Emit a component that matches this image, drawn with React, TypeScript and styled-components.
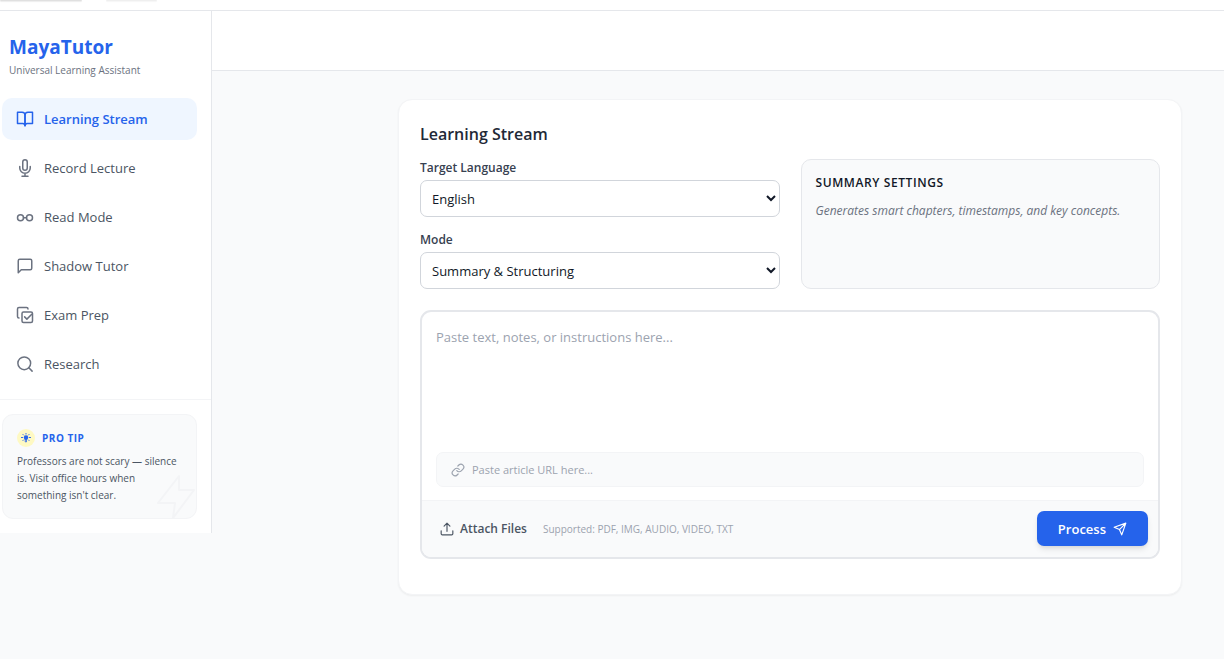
import React from 'react';
import styled, { createGlobalStyle, css } from 'styled-components';

const GlobalStyle = createGlobalStyle`
  *, *::before, *::after { box-sizing: border-box; }
  body {
    margin: 0;
    background: #f9fafb;
    color: #111827;
    font-family: 'Segoe UI', 'Open Sans', 'Noto Sans', sans-serif;
    font-size: 13px;
    line-height: 20px;
  }
  button, input, select, textarea { font: inherit; color: inherit; margin: 0; }
  h1, h2, h3, p { margin: 0; }
`;

const Page = styled.div`
  min-height: 100vh;
`;

const TopStrip = styled.div`
  display: flex;
  gap: 24px;
  height: 11px;
  background: #fff;
  border-bottom: 1px solid #e5e7eb;
`;

const TopTab = styled.div<{ $width: number; $strong?: boolean }>`
  width: ${(p) => p.$width}px;
  height: 1px;
  border-radius: 0 0 4px 4px;
  background: ${(p) => (p.$strong ? '#e0e0e0' : '#efefef')};
  box-shadow: 0 1px 1px ${(p) => (p.$strong ? '#ebebeb' : '#f5f5f5')};
`;

const Shell = styled.div`
  display: flex;
  align-items: flex-start;
`;

const Sidebar = styled.aside`
  flex: 0 0 212px;
  background: #fff;
  border-right: 1px solid #e5e7eb;
`;

const Brand = styled.div`
  padding: 22px 9px 19px;
`;

const BrandName = styled.h1`
  font-size: 19px;
  line-height: 28px;
  font-weight: 700;
  color: #2563eb;
`;

const Tagline = styled.p`
  font-size: 10px;
  line-height: 18px;
  color: #6b7280;
`;

const Nav = styled.nav`
  display: flex;
  flex-direction: column;
  gap: 7px;
  padding: 0 14px 14px 2px;
`;

const NavItem = styled.button<{ $active?: boolean }>`
  display: flex;
  align-items: center;
  gap: 10px;
  height: 42px;
  padding: 0 14px;
  border: 0;
  border-radius: 10px;
  background: transparent;
  color: #4b5563;
  text-align: left;
  cursor: pointer;

  svg { color: #6b7280; }

  ${(p) =>
    p.$active &&
    css`
      background: #eff6ff;
      color: #2563eb;
      font-weight: 600;
      svg { color: #2563eb; }
    `}
`;

const TipArea = styled.div`
  padding: 14px 14px 14px 2px;
  border-top: 1px solid #f3f4f6;
`;

const Tip = styled.section`
  position: relative;
  overflow: hidden;
  padding: 14px;
  border: 1px solid #f3f4f6;
  border-radius: 11px;
  background: #f9fafb;
`;

const TipHead = styled.div`
  display: flex;
  align-items: center;
  gap: 7px;
  margin-bottom: 6px;
`;

const TipBadge = styled.span`
  display: grid;
  place-items: center;
  width: 18px;
  height: 18px;
  border-radius: 50%;
  background: #fef9c3;
  color: #2563eb;
`;

const TipTitle = styled.h3`
  font-size: 10px;
  line-height: 18px;
  font-weight: 700;
  letter-spacing: 0.05em;
  color: #2563eb;
`;

const TipText = styled.p`
  font-size: 10px;
  line-height: 17px;
  color: #4b5563;
`;

const Bolt = styled.svg`
  position: absolute;
  right: -2px;
  bottom: -2px;
  color: #f3f4f6;
`;

const Main = styled.main`
  flex: 1;
  min-width: 0;
`;

const HeaderBar = styled.header`
  height: 60px;
  background: #fff;
  border-bottom: 1px solid #e5e7eb;
`;

const Content = styled.div`
  padding: 28px 42px 28px 186px;
`;

const Card = styled.section`
  padding: 20px 21px 35px;
  border: 1px solid #f3f4f6;
  border-radius: 14px;
  background: #fff;
  box-shadow: 0 1px 2px rgba(0, 0, 0, 0.05);
`;

const CardTitle = styled.h2`
  font-size: 16px;
  line-height: 28px;
  margin-bottom: 11px;
  font-weight: 600;
  color: #1f2937;
`;

const SettingsGrid = styled.div`
  display: grid;
  grid-template-columns: 1fr 1fr;
  gap: 21px;
  margin-bottom: 21px;
`;

const Fields = styled.div`
  display: flex;
  flex-direction: column;
  gap: 14px;
`;

const Field = styled.div`
  display: flex;
  flex-direction: column;
  gap: 3px;
`;

const Label = styled.label`
  font-size: 12px;
  line-height: 18px;
  font-weight: 600;
  color: #374151;
`;

const Select = styled.select`
  width: 100%;
  height: 37px;
  padding: 0 7px;
  border: 1px solid #d1d5db;
  border-radius: 7px;
  background: #fff;
  color: #111827;
`;

const SummaryPanel = styled.section`
  padding: 14px;
  border: 1px solid #e5e7eb;
  border-radius: 10px;
  background: #f9fafb;
`;

const SummaryTitle = styled.h3`
  font-size: 12px;
  line-height: 18px;
  margin-bottom: 10px;
  font-weight: 600;
  letter-spacing: 0.05em;
  color: #111827;
`;

const SummaryText = styled.p`
  font-size: 12px;
  line-height: 18px;
  font-style: italic;
  color: #6b7280;
`;

const Composer = styled.div`
  overflow: hidden;
  border: 2px solid #e5e7eb;
  border-radius: 11px;
  background: #fff;
`;

const NotesInput = styled.textarea`
  display: block;
  width: 100%;
  height: 140px;
  padding: 15px 14px;
  border: 0;
  outline: 0;
  resize: none;
  background: transparent;
  line-height: 20px;
  &::placeholder { color: #9ca3af; }
`;

const UrlRow = styled.label`
  display: flex;
  align-items: center;
  gap: 7px;
  height: 35px;
  margin: 0 14px 13px;
  padding: 0 14px;
  border: 1px solid #f3f4f6;
  border-radius: 7px;
  background: #f9fafb;
  color: #9ca3af;
`;

const UrlInput = styled.input`
  flex: 1;
  min-width: 0;
  padding: 0;
  border: 0;
  outline: 0;
  background: transparent;
  font-size: 11px;
  line-height: 18px;
  color: #374151;
  &::placeholder { color: #9ca3af; }
`;

const ComposerFooter = styled.div`
  display: flex;
  align-items: center;
  gap: 8px;
  padding: 10px 10px 11px;
  border-top: 1px solid #f3f4f6;
  background: #f9fafb;
`;

const AttachButton = styled.button`
  display: flex;
  align-items: center;
  gap: 6px;
  padding: 7px 8px;
  border: 0;
  background: transparent;
  font-size: 12px;
  line-height: 18px;
  font-weight: 600;
  color: #4b5563;
  cursor: pointer;
`;

const Supported = styled.span`
  flex: 1;
  font-size: 10px;
  line-height: 18px;
  color: #9ca3af;
`;

const ProcessButton = styled.button`
  display: flex;
  align-items: center;
  gap: 7px;
  height: 35px;
  padding: 0 21px;
  border: 0;
  border-radius: 7px;
  background: #2563eb;
  color: #fff;
  font-weight: 600;
  box-shadow: 0 4px 6px -1px rgba(0, 0, 0, 0.1), 0 2px 4px -2px rgba(0, 0, 0, 0.1);
  cursor: pointer;
`;

type IconProps = { size?: number; children: React.ReactNode };

const Icon = ({ size = 18, children }: IconProps) => (
  <svg
    width={size}
    height={size}
    viewBox="0 0 24 24"
    fill="none"
    stroke="currentColor"
    strokeWidth={2}
    strokeLinecap="round"
    strokeLinejoin="round"
    aria-hidden="true"
  >
    {children}
  </svg>
);

const navItems = [
  {
    label: 'Learning Stream',
    icon: (
      <>
        <path d="M2 3h6a4 4 0 0 1 4 4v14a3 3 0 0 0-3-3H2z" />
        <path d="M22 3h-6a4 4 0 0 0-4 4v14a3 3 0 0 1 3-3h7z" />
      </>
    ),
  },
  {
    label: 'Record Lecture',
    icon: (
      <>
        <path d="M12 1a3 3 0 0 0-3 3v8a3 3 0 0 0 6 0V4a3 3 0 0 0-3-3z" />
        <path d="M19 10v2a7 7 0 0 1-14 0v-2M12 19v4M8 23h8" />
      </>
    ),
  },
  {
    label: 'Read Mode',
    icon: (
      <>
        <circle cx="6" cy="13" r="4" />
        <circle cx="18" cy="13" r="4" />
        <path d="M10 13h4" />
      </>
    ),
  },
  {
    label: 'Shadow Tutor',
    icon: <path d="M21 15a2 2 0 0 1-2 2H7l-4 4V5a2 2 0 0 1 2-2h14a2 2 0 0 1 2 2z" />,
  },
  {
    label: 'Exam Prep',
    icon: (
      <>
        <rect x="8" y="8" width="14" height="14" rx="2" />
        <path d="M4 16a2 2 0 0 1-2-2V4a2 2 0 0 1 2-2h10a2 2 0 0 1 2 2" />
        <path d="M11.500 14.500l3 3L21 11" />
      </>
    ),
  },
  {
    label: 'Research',
    icon: (
      <>
        <circle cx="11" cy="11" r="8.500" />
        <path d="M21.500 21.500l-4.400-4.400" />
      </>
    ),
  },
];

export default function App() {
  return (
    <Page>
      <GlobalStyle />
      <TopStrip>
        <TopTab $width={82} $strong />
        <TopTab $width={51} />
      </TopStrip>
      <Shell>
        <Sidebar>
          <Brand>
            <BrandName>MayaTutor</BrandName>
            <Tagline>Universal Learning Assistant</Tagline>
          </Brand>
          <Nav>
            {navItems.map((item, i) => (
              <NavItem key={item.label} type="button" $active={i === 0}>
                <Icon>{item.icon}</Icon>
                {item.label}
              </NavItem>
            ))}
          </Nav>
          <TipArea>
            <Tip>
              <TipHead>
                <TipBadge>
                  <svg width="10" height="10" viewBox="0 0 20 20" fill="none" stroke="currentColor" strokeWidth="2" strokeLinecap="round" aria-hidden="true">
                    <circle cx="10" cy="9" r="4.5" fill="currentColor" stroke="none" />
                    <path d="M10 1v1M4 3l1 1M16 3l-1 1M1 9h2M17 9h2M4 15l1-1M16 15l-1-1" />
                    <path d="M9 12h2v6H9z" fill="currentColor" strokeWidth="1" />
                  </svg>
                </TipBadge>
                <TipTitle>PRO TIP</TipTitle>
              </TipHead>
              <TipText>Professors are not scary — silence is. Visit office hours when something isn't clear.</TipText>
              <Bolt width="42" height="48" viewBox="0 0 42 48" fill="none" stroke="currentColor" strokeWidth="2" strokeLinejoin="round" aria-hidden="true">
                <path d="M23 4 2 31h17l-2 15 21-28H23z" />
              </Bolt>
            </Tip>
          </TipArea>
        </Sidebar>
        <Main>
          <HeaderBar />
          <Content>
            <Card>
              <CardTitle>Learning Stream</CardTitle>
              <SettingsGrid>
                <Fields>
                  <Field>
                    <Label htmlFor="language">Target Language</Label>
                    <Select id="language" defaultValue="English">
                      <option>English</option>
                    </Select>
                  </Field>
                  <Field>
                    <Label htmlFor="mode">Mode</Label>
                    <Select id="mode" defaultValue="Summary & Structuring">
                      <option>Summary &amp; Structuring</option>
                    </Select>
                  </Field>
                </Fields>
                <SummaryPanel>
                  <SummaryTitle>SUMMARY SETTINGS</SummaryTitle>
                  <SummaryText>Generates smart chapters, timestamps, and key concepts.</SummaryText>
                </SummaryPanel>
              </SettingsGrid>
              <Composer>
                <NotesInput aria-label="Notes" placeholder="Paste text, notes, or instructions here..." />
                <UrlRow>
                  <Icon size={14}>
                    <path d="M10 13a5 5 0 0 0 7.540.540l3-3a5 5 0 0 0-7.070-7.070l-1.720 1.710" />
                    <path d="M14 11a5 5 0 0 0-7.540-.540l-3 3a5 5 0 0 0 7.070 7.070l1.710-1.710" />
                  </Icon>
                  <UrlInput type="url" aria-label="Article URL" placeholder="Paste article URL here..." />
                </UrlRow>
                <ComposerFooter>
                  <AttachButton type="button">
                    <Icon size={14}>
                      <path d="M2 15v5a2 2 0 0 0 2 2h16a2 2 0 0 0 2-2v-5M17 7l-5-5-5 5M12 2v14" />
                    </Icon>
                    Attach Files
                  </AttachButton>
                  <Supported>Supported: PDF, IMG, AUDIO, VIDEO, TXT</Supported>
                  <ProcessButton type="button">
                    Process
                    <Icon size={14}>
                      <path d="M22 2 15 22l-4-9-9-4zM22 2 11 13" />
                    </Icon>
                  </ProcessButton>
                </ComposerFooter>
              </Composer>
            </Card>
          </Content>
        </Main>
      </Shell>
    </Page>
  );
}
